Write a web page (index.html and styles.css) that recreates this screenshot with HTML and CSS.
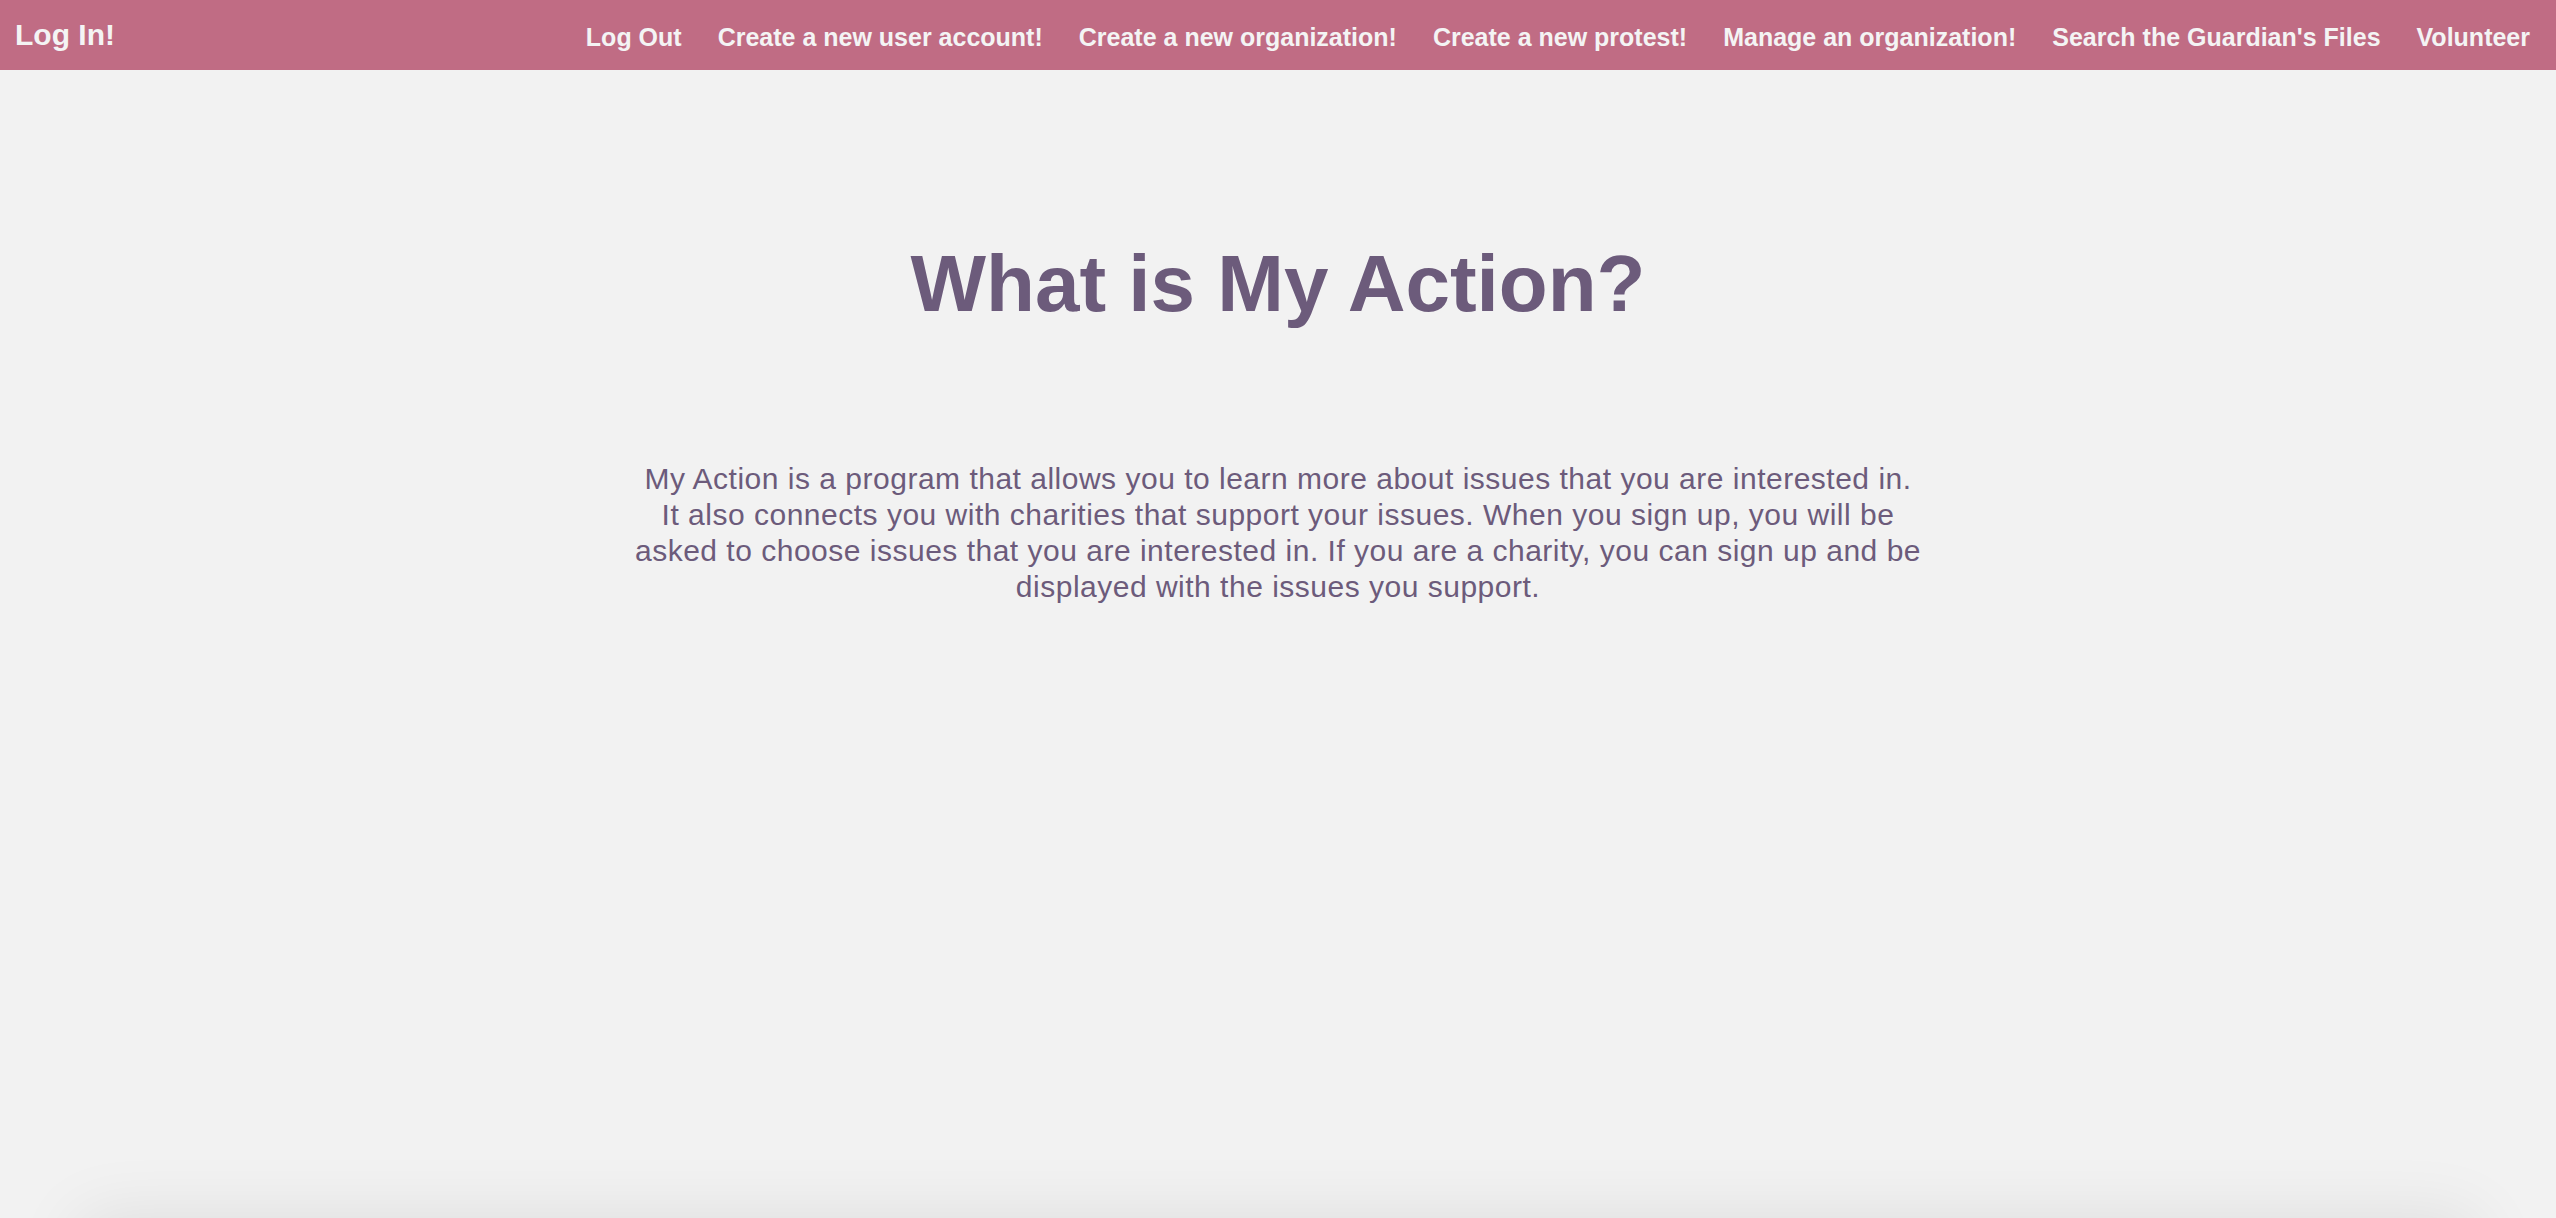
FILE: index.html
```html
<!DOCTYPE html>
<html lang="en">

<head>
  <meta charset="utf-8">
  <title>My Action</title>
  <link rel="stylesheet" href="styles.css">
</head>

<body>

<div class="navbar">
  <a class="brand" href="#">Log In!</a>
  <div class="links">
    <a href="#">Log Out</a>
    <a href="#">Create a new user account!</a>
    <a href="#">Create a new organization!</a>
    <a href="#">Create a new protest!</a>
    <a href="#">Manage an organization!</a>
    <a href="#">Search the Guardian's Files</a>
    <a href="#">Volunteer</a>
  </div>
</div>

<div class="main">
  <h1>What is My Action?</h1>
  <p class="about">
    My Action is a program that allows you to learn more about issues that you are interested in.<br>
    It also connects you with charities that support your issues. When you sign up, you will be<br>
    asked to choose issues that you are interested in. If you are a charity, you can sign up and be<br>
    displayed with the issues you support.
  </p>
</div>

<div class="footer"></div>

</body>

</html>
```

FILE: styles.css
```css
body { background: #f2f2f2; font-family: "Liberation Sans", Arial, sans-serif; margin: 0; padding: 0 }

/* Barre du haut */

.navbar {
  display: flex;
  align-items: center;
  justify-content: space-between;
  height: 70px;
  background: #c06c84;
  padding: 0 8px 0 15px;
}

.navbar a {
  color: #f4f4f4;
  font-weight: bold;
  text-decoration: none;
}

.navbar .brand { font-size: 30px }

.navbar .links { display: flex; padding-top: 4px }
.navbar .links a { font-size: 25px; padding: 0 18px }

/* Contenu */

.main {
  box-sizing: border-box;
  min-height: 1148px;
  padding-top: 168px;
  text-align: center;
  color: #6c5b7b;
}

.main h1 {
  font-size: 80px;
  line-height: 92px;
  margin: 0;
}

.about {
  max-width: 1320px;
  margin: 131px auto 0;
  font-size: 30px;
  letter-spacing: 0.5px;
  line-height: 36px;
}

.footer {
  height: 200px;
  margin: 0 80px;
  box-shadow: 0 0 70px rgba(0, 0, 0, 0.09);
}
```
